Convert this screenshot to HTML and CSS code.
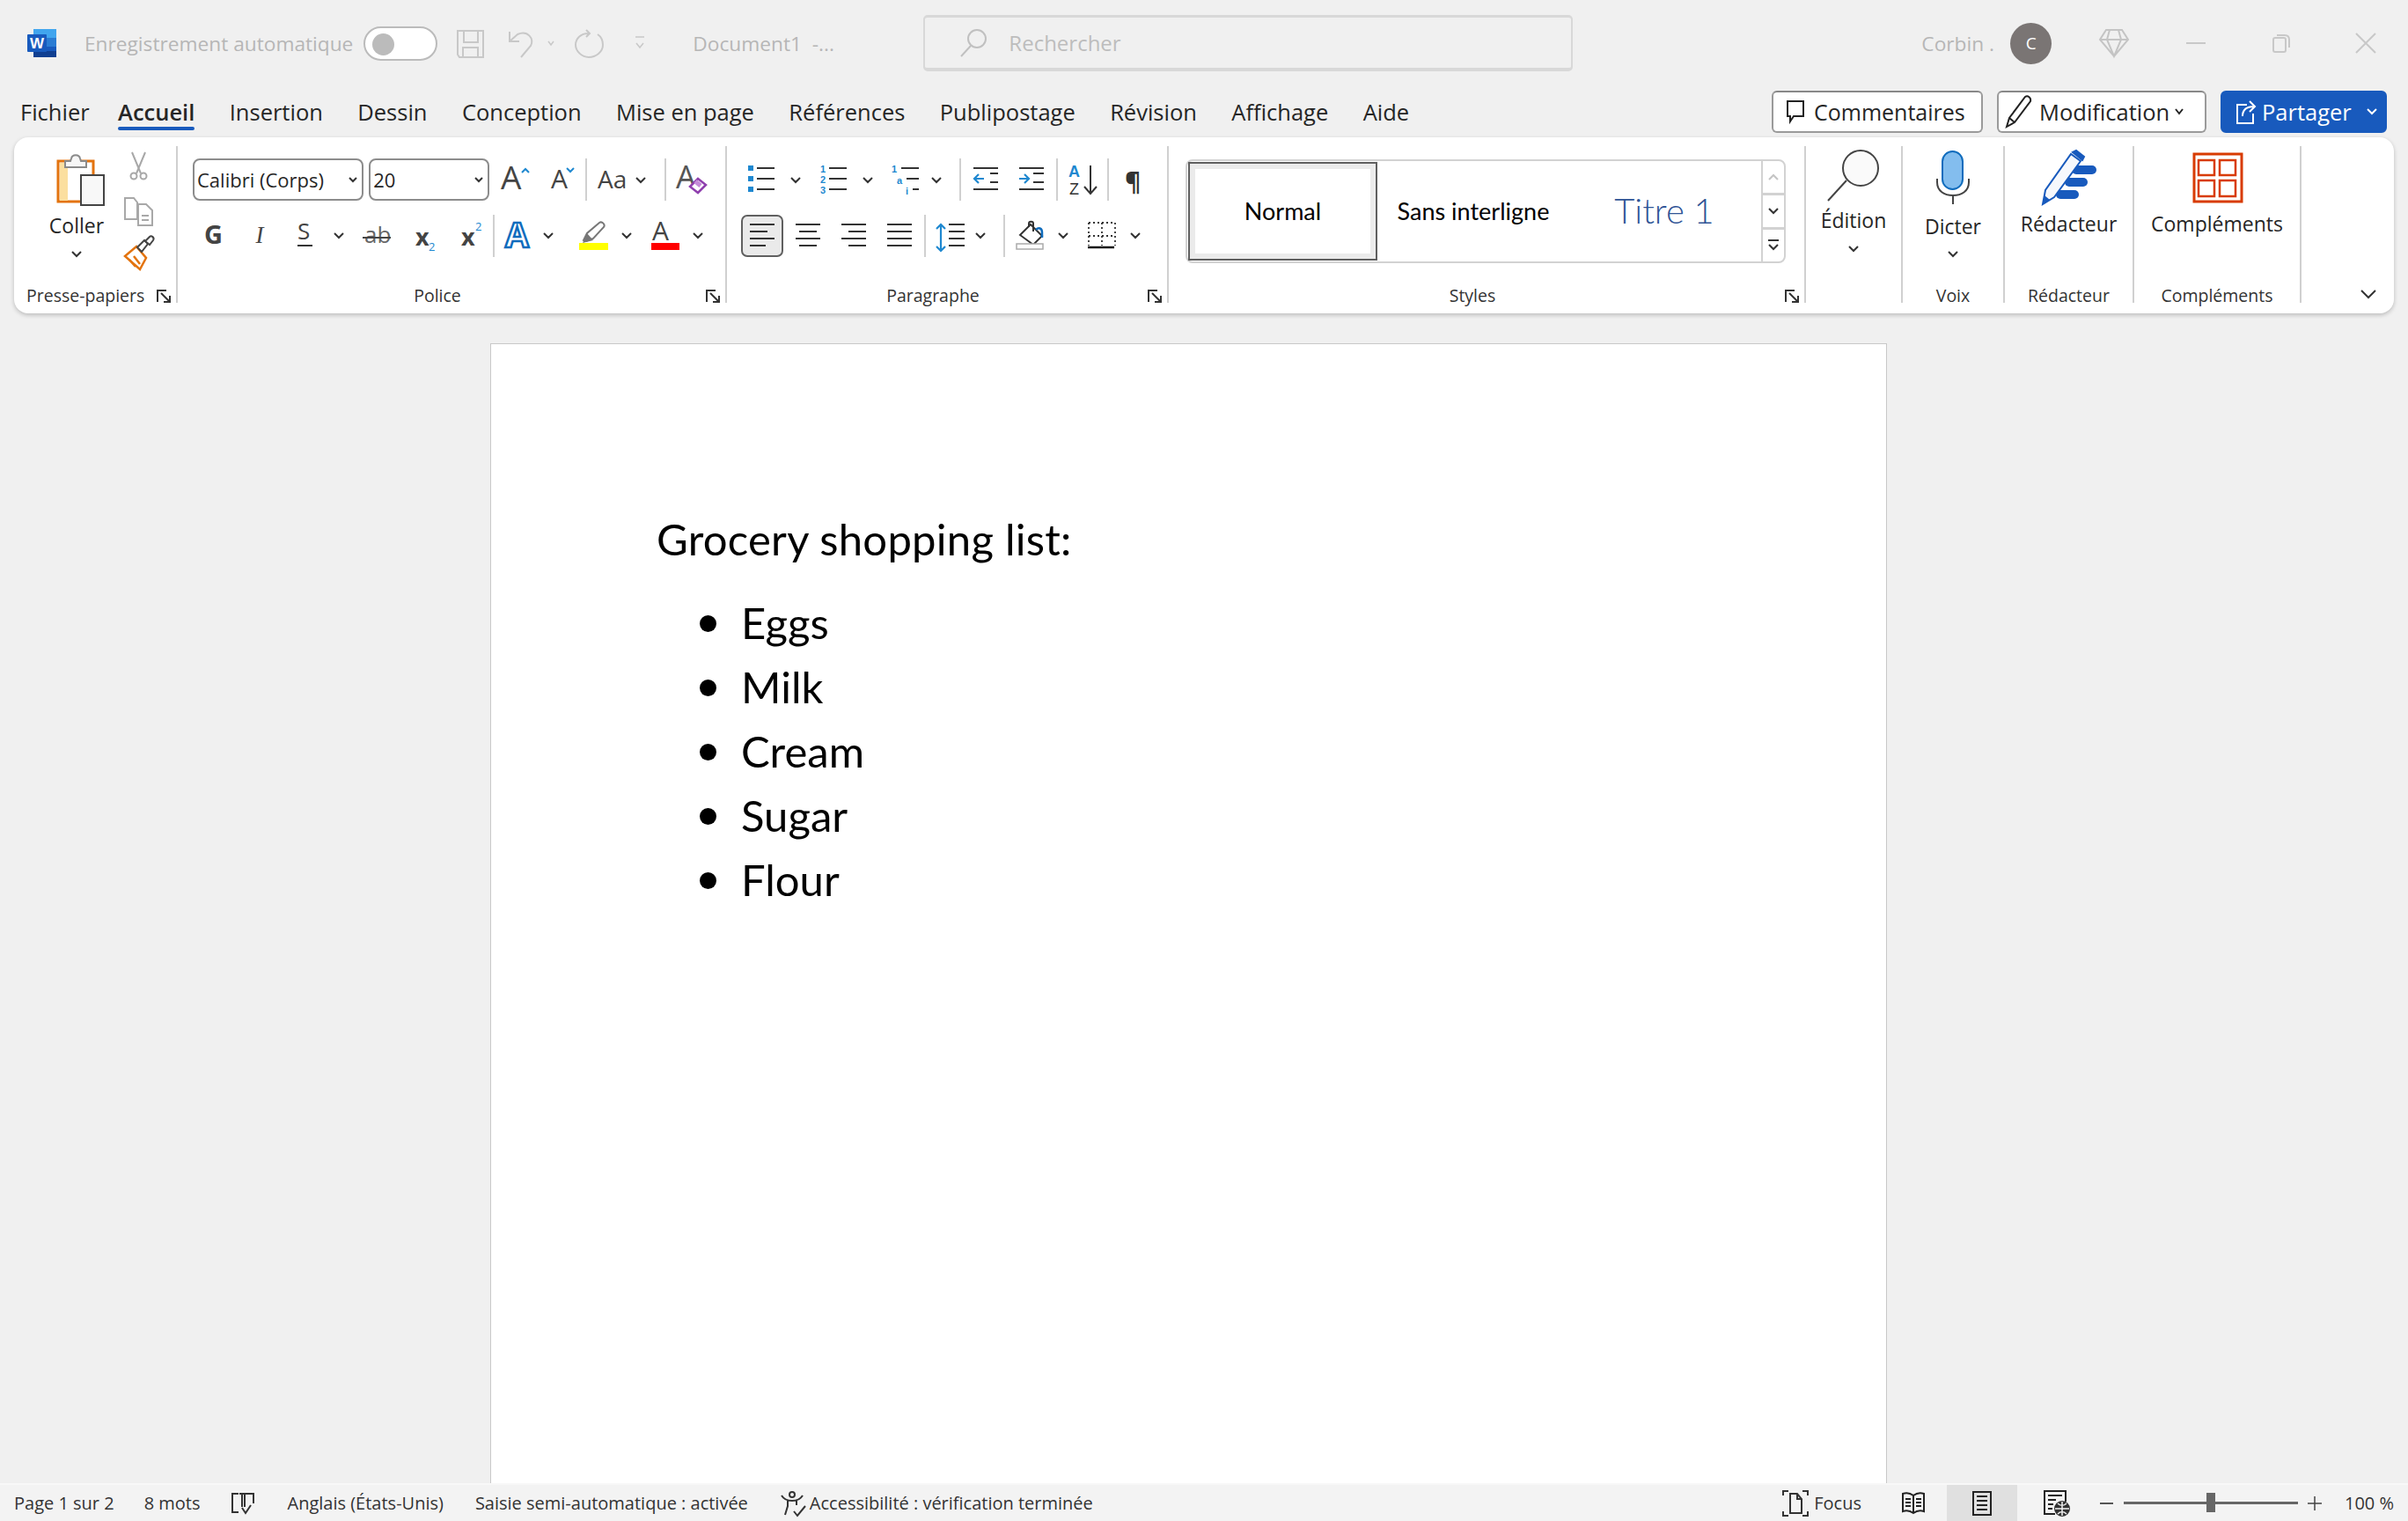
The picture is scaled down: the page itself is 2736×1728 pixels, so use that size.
FILE: index.html
```html
<!DOCTYPE html>
<html lang="fr">
<head>
    <meta charset="UTF-8">
    <title>Document1 - Word</title>
    <link rel="stylesheet" href="styles.css">
</head>
<body>
    <header class="titlebar">
        <svg class="logo" width="36" height="34" viewBox="30 31 36 34">
            <rect x="38" y="32" width="26" height="11" fill="#41a5ee"/>
            <rect x="38" y="42" width="26" height="11" fill="#2b7cd3"/>
            <rect x="38" y="52" width="26" height="6" fill="#185abd"/>
            <rect x="38" y="57" width="26" height="7" fill="#103f91"/>
            <rect x="31" y="38" width="22" height="20" rx="1" fill="#185abd"/>
            <text x="42" y="54" class="logo-w">W</text>
        </svg>
        <span class="autosave">Enregistrement automatique</span>
        <span class="toggle"><span class="knob"></span></span>
        <svg class="qat" width="250" height="40" viewBox="510 28 250 40" fill="none" stroke="#c8c8c8" stroke-width="2">
            <path d="M521 34h29v30h-27l-2-3z"/>
            <path d="M528 34v13h16v-13M527 64v-11h17v11"/>
            <path d="M580 35v11h11M580 46l9-8c12-5 19 5 15 13l-11 13"/>
            <path d="M624 46l3 4 3-4" stroke-width="1.5"/>
            <path d="M667 33l4 4-4 4M671 37c-10-1-16 6-16 13 0 7 7 14 15 14s16-6 16-14c0-6-3-10-6-12"/>
            <path d="M723 41h10M724 48l4 5 4-5" stroke-width="1.5"/>
        </svg>
        <span class="docname">Document1&nbsp; -...</span>
        <div class="search">
            <svg width="34" height="36" viewBox="0 0 34 36" fill="none" stroke="#c0c0c0" stroke-width="2">
                <circle cx="21" cy="13" r="10"/>
                <path d="M14 21L3 33"/>
            </svg>
            <span>Rechercher</span>
        </div>
        <span class="username">Corbin .</span>
        <span class="avatar">C</span>
        <svg class="diamond" width="36" height="34" viewBox="0 0 36 34" fill="none" stroke="#c4c4c4" stroke-width="2">
            <path d="M9 2h18l7 11-16 19L2 13zM2 13h32M13 2l-3 11 8 19 8-19-3-11"/>
        </svg>
        <svg class="winbtn" width="22" height="4" viewBox="0 0 22 4"><path d="M0 2h22" stroke="#c8c8c8" stroke-width="2"/></svg>
        <svg class="winbtn" width="20" height="22" viewBox="0 0 20 22" fill="none" stroke="#c8c8c8" stroke-width="2"><rect x="1" y="5" width="14" height="16" rx="2"/><path d="M5 2h9c3 0 5 2 5 5v9"/></svg>
        <svg class="winbtn" width="24" height="24" viewBox="0 0 24 24"><path d="M1 1l22 22M23 1L1 23" stroke="#c8c8c8" stroke-width="2"/></svg>
    </header>

    <nav class="tabs">
        <span class="tab first">Fichier</span>
        <span class="tab active">Accueil</span>
        <span class="tab">Insertion</span>
        <span class="tab">Dessin</span>
        <span class="tab">Conception</span>
        <span class="tab">Mise en page</span>
        <span class="tab">Références</span>
        <span class="tab">Publipostage</span>
        <span class="tab">Révision</span>
        <span class="tab">Affichage</span>
        <span class="tab">Aide</span>
        <div class="tab-actions">
            <span class="action comments">
                <svg width="22" height="32" viewBox="0 0 22 32" fill="none" stroke="#222" stroke-width="2"><path d="M2 4h18v17H9l-4 6v-6H2z"/></svg>
                Commentaires
            </span>
            <span class="action editing">
                <svg width="34" height="40" viewBox="0 0 34 40" fill="none" stroke="#222" stroke-width="2"><path d="M3 37l3-10L24 3c3-2 7 1 6 5L12 32z"/><path d="M6 27l6 5"/></svg>
                Modification
                <svg width="10" height="8" viewBox="0 0 10 8" fill="none" stroke="#222" stroke-width="2"><path d="M1 1l4 5 4-5"/></svg>
            </span>
            <span class="action share">
                <svg width="26" height="30" viewBox="0 0 26 30" fill="none" stroke="#fff" stroke-width="2"><path d="M14 7H3v21h18V17"/><path d="M9 20c0-8 5-11 13-11M17 3l6 6-6 6"/></svg>
                Partager
                <svg class="share-chev" width="12" height="8" viewBox="0 0 12 8" fill="none" stroke="#fff" stroke-width="2"><path d="M1 1l5 5 5-5"/></svg>
            </span>
        </div>
    </nav>

    <section class="ribbon">
        <div class="group clipboard">
            <div class="group-body">
                <div class="paste">
                    <svg width="102" height="68" viewBox="36 170 102 68">
                        <rect x="66" y="183" width="40" height="46" fill="#fff" stroke="#e3730e" stroke-width="3"/>
                        <rect x="68" y="185" width="9" height="43" fill="#fbdf9f"/>
                        <path d="M74 190v-7h6l1-3c1-5 9-5 10 0l1 3h6v7z" fill="#f7f7f7" stroke="#8a8a8a" stroke-width="2"/>
                        <rect x="92" y="199" width="26" height="34" fill="#f8f8f8" stroke="#444" stroke-width="2"/>
                    </svg>
                    <span class="big-text coller">Coller</span>
                    <svg class="chev-big" width="12" height="8" viewBox="0 0 12 8" fill="none" stroke="#333" stroke-width="2"><path d="M1 1l5 5 5-5"/></svg>
                </div>
                <svg class="clip-small" width="40" height="146" viewBox="138 166 40 146" fill="none">
                    <g stroke="#a8a8a8" stroke-width="2">
                        <path d="M150 173l10 24M165 173l-10 24"/>
                        <circle cx="152" cy="200" r="3.5"/><circle cx="163" cy="200" r="3.5"/>
                        <path d="M142 225h10l4 5v19h-14z" fill="#fff"/>
                        <path d="M157 232h9l7 7v17h-16z" fill="#fff"/>
                        <path d="M161 245h8M161 250h8"/>
                    </g>
                    <g stroke="#e3730e" stroke-width="2.5">
                        <path d="M142 291l13-11 11 13-7 13z" fill="#fff"/>
                        <path d="M147 295l7 8M152 291l7 9"/>
                    </g>
                    <path d="M156 281l8-8 4 4-7 9z" fill="#fff" stroke="#444" stroke-width="2"/>
                    <path d="M165 274l5-5c2-2 6 1 4 4l-4 5z" fill="#fff" stroke="#444" stroke-width="2"/>
                </svg>
            </div>
            <div class="group-label">Presse-papiers</div>
            <svg class="launcher" width="16" height="15" viewBox="0 0 16 15" fill="none" stroke="#333" stroke-width="2"><path d="M11 1H1v13M5 4l9 9M15 7v7H8"/></svg>
        </div>

        <div class="group police">
            <div class="group-body rows">
                <div class="row">
                    <div class="combo font-combo">Calibri (Corps)
                        <svg width="10" height="7" viewBox="0 0 10 7" fill="none" stroke="#333" stroke-width="2"><path d="M1 1l4 4 4-4"/></svg>
                    </div>
                    <div class="combo size-combo">20
                        <svg width="10" height="7" viewBox="0 0 10 7" fill="none" stroke="#333" stroke-width="2"><path d="M1 1l4 4 4-4"/></svg>
                    </div>
                    <svg class="after-combo" width="268" height="48" viewBox="557 180 268 48" fill="none">
                        <text x="570" y="215" class="ic" font-size="37" fill="#444">A</text>
                        <path d="M594 196l4-4 4 4" stroke="#1e88d0" stroke-width="2"/>
                        <text x="627" y="214" class="ic" font-size="30" fill="#444">A</text>
                        <path d="M645 191l4 4 4-4" stroke="#1e88d0" stroke-width="2"/>
                        <path d="M667 180v48M757 180v48" stroke="#d0d0d0" stroke-width="2"/>
                        <text x="680" y="214" class="ic" font-size="28" fill="#444">Aa</text>
                        <path d="M724 202l5 5 5-5" stroke="#333" stroke-width="2"/>
                        <text x="769" y="214" class="ic" font-size="36" fill="#555">A</text>
                        <path d="M785 212l9-9 9 7-9 9z" fill="#fff" stroke="#8f3fae" stroke-width="2.5"/>
                        <path d="M791 206l6 5" stroke="#c58bd8" stroke-width="5"/>
                    </svg>
                </div>
                <div class="row">
                    <svg width="606" height="48" viewBox="219 244 606 48" fill="none">
                        <text x="232" y="277" class="ic bold" font-size="29" fill="#444">G</text>
                        <text x="295" y="276" class="ic serif-i" font-size="27" fill="#444" text-anchor="middle">I</text>
                        <text x="338" y="272" class="ic" font-size="26" fill="#444">S</text>
                        <path d="M338 279h17" stroke="#333" stroke-width="2"/>
                        <path d="M380 265l5 5 5-5" stroke="#333" stroke-width="2"/>
                        <text x="414" y="276" class="ic" font-size="26" fill="#666">ab</text>
                        <path d="M412 270h32" stroke="#444" stroke-width="2"/>
                        <text x="472" y="279" class="ic bold" font-size="27" fill="#444">x</text>
                        <text x="487" y="285" class="ic" font-size="13" fill="#1e88d0">2</text>
                        <text x="524" y="279" class="ic bold" font-size="27" fill="#444">x</text>
                        <text x="540" y="262" class="ic" font-size="13" fill="#1e88d0">2</text>
                        <path d="M561 244v48" stroke="#d0d0d0" stroke-width="2"/>
                        <text x="574" y="281" class="ic bold" font-size="39" fill="#fff" stroke="#0f6cbd" stroke-width="2.5">A</text>
                        <path d="M618 265l5 5 5-5M707 265l5 5 5-5M788 265l5 5 5-5" stroke="#333" stroke-width="2"/>
                        <path d="M663 273l4-8 14-12c3-2 7 2 5 5l-12 13-8 3z" fill="#fff" stroke="#777" stroke-width="2"/>
                        <path d="M662 276l5-11 7 8z" fill="#777"/>
                        <rect x="658" y="276" width="33" height="8" fill="#ffff00"/>
                        <text x="741" y="273" class="ic" font-size="30" fill="#444">A</text>
                        <rect x="740" y="276" width="32" height="8" fill="#ff0000"/>
                    </svg>
                </div>
            </div>
            <div class="group-label">Police</div>
            <svg class="launcher" width="16" height="15" viewBox="0 0 16 15" fill="none" stroke="#333" stroke-width="2"><path d="M11 1H1v13M5 4l9 9M15 7v7H8"/></svg>
        </div>

        <div class="group paragraphe">
            <div class="group-body rows">
                <div class="row">
                    <svg width="480" height="48" viewBox="841 180 480 48" fill="none">
                        <g fill="#1e88d0">
                            <rect x="850" y="188" width="6" height="6"/><rect x="850" y="200" width="6" height="6"/><rect x="850" y="212" width="6" height="6"/>
                            <text x="932" y="196" class="ic-small">1</text>
                            <text x="932" y="208" class="ic-small">2</text>
                            <text x="932" y="220" class="ic-small">3</text>
                            <text x="1013" y="196" class="ic-small">1</text>
                            <text x="1019" y="209" class="ic-small">a</text>
                            <text x="1029" y="221" class="ic-small">i</text>
                        </g>
                        <path d="M860 191h20M860 203h20M860 215h20M942 191h20M942 203h20M942 215h20M1024 191h20M1030 203h14M1037 215h7" stroke="#333" stroke-width="2"/>
                        <path d="M899 202l5 5 5-5M981 202l5 5 5-5M1059 202l5 5 5-5" stroke="#333" stroke-width="2"/>
                        <path d="M1091 180v48M1201 180v48M1259 180v48" stroke="#d0d0d0" stroke-width="2"/>
                        <path d="M1106 191h28M1125 197h9M1125 207h9M1106 215h28M1158 191h28M1174 197h12M1174 207h12M1158 215h28" stroke="#333" stroke-width="2"/>
                        <path d="M1118 203h-11M1112 198l-5 5 5 5M1158 203h11M1164 198l5 5-5 5" stroke="#1e88d0" stroke-width="2.2"/>
                        <text x="1214" y="200.5" class="ic-sort" fill="#1e88d0" font-weight="700">A</text>
                        <text x="1215" y="221" class="ic-sort" fill="#333">Z</text>
                        <path d="M1239 188v31M1232 212l7 8 7-8" stroke="#333" stroke-width="2"/>
                        <text x="1278" y="217" class="ic bold" font-size="28" fill="#333">¶</text>
                    </svg>
                </div>
                <div class="row">
                    <svg width="480" height="48" viewBox="841 244 480 48" fill="none">
                        <rect x="843" y="245" width="46" height="46" rx="6" fill="#eaeaea" stroke="#606060" stroke-width="2"/>
                        <path d="M852 255h28M852 263h20M852 271h28M852 279h18" stroke="#333" stroke-width="2"/>
                        <path d="M904 255h28M908 263h20M904 271h28M908 279h20" stroke="#333" stroke-width="2"/>
                        <path d="M956 255h28M964 263h20M956 271h28M964 279h20" stroke="#333" stroke-width="2"/>
                        <path d="M1008 255h28M1008 263h28M1008 271h28M1008 279h28" stroke="#333" stroke-width="2"/>
                        <path d="M1051 244v48M1141 244v48" stroke="#d0d0d0" stroke-width="2"/>
                        <path d="M1069 256v29M1064 260l5-5 5 5M1064 280l5 5 5-5" stroke="#1e88d0" stroke-width="2.2"/>
                        <path d="M1078 255h18M1078 263h18M1078 271h18M1078 279h18" stroke="#333" stroke-width="2"/>
                        <path d="M1109 265l5 5 5-5M1203 265l5 5 5-5M1285 265l5 5 5-5" stroke="#333" stroke-width="2"/>
                        <path d="M1159 267l12-12 13 13-10 10z" fill="#fff" stroke="#333" stroke-width="2"/>
                        <path d="M1169 258v-4c0-3 5-3 5 0v9" stroke="#333" stroke-width="2"/>
                        <path d="M1177 261c3-3 7-2 7 3v6" stroke="#0f6cbd" stroke-width="2.5"/>
                        <rect x="1155" y="277" width="30" height="6" stroke="#aaa" stroke-width="1.5" fill="#fff"/>
                        <path d="M1237 253h30M1237 268h30M1237 253v26M1252 253v26M1267 253v26" stroke="#333" stroke-width="1.8" stroke-dasharray="2 3"/>
                        <path d="M1236 281h30" stroke="#111" stroke-width="2.5"/>
                    </svg>
                </div>
            </div>
            <div class="group-label">Paragraphe</div>
            <svg class="launcher" width="16" height="15" viewBox="0 0 16 15" fill="none" stroke="#333" stroke-width="2"><path d="M11 1H1v13M5 4l9 9M15 7v7H8"/></svg>
        </div>

        <div class="group styles-group">
            <div class="group-body">
                <div class="gallery">
                    <div class="style-normal"><div class="style-inner">Normal</div></div>
                    <div class="style-plain">Sans interligne</div>
                    <div class="style-title">Titre 1</div>
                    <div class="gallery-scroll">
                        <div class="scroll-btn"><svg width="12" height="8" viewBox="0 0 12 8" fill="none" stroke="#c4c4c4" stroke-width="2"><path d="M1 7l5-5 5 5"/></svg></div>
                        <div class="scroll-btn"><svg width="12" height="8" viewBox="0 0 12 8" fill="none" stroke="#333" stroke-width="2"><path d="M1 1l5 5 5-5"/></svg></div>
                        <div class="scroll-btn"><svg width="14" height="14" viewBox="0 0 14 14" fill="none" stroke="#333" stroke-width="2"><path d="M1 1h12M2 6l5 5 5-5"/></svg></div>
                    </div>
                </div>
            </div>
            <div class="group-label">Styles</div>
            <svg class="launcher" width="16" height="15" viewBox="0 0 16 15" fill="none" stroke="#333" stroke-width="2"><path d="M11 1H1v13M5 4l9 9M15 7v7H8"/></svg>
        </div>

        <div class="group edition">
            <div class="group-body big">
                <svg width="90" height="66" viewBox="2061 166 90 66" fill="none" stroke="#444" stroke-width="2">
                    <circle cx="2114" cy="191" r="20" fill="#fafafa"/>
                    <path d="M2098 205l-21 23"/>
                </svg>
                <span class="big-text">Édition</span>
                <svg class="chev-big" width="12" height="8" viewBox="0 0 12 8" fill="none" stroke="#333" stroke-width="2"><path d="M1 1l5 5 5-5"/></svg>
            </div>
            <div class="group-label"></div>
        </div>

        <div class="group voix">
            <div class="group-body big">
                <svg width="90" height="70" viewBox="2175 166 90 70" fill="none">
                    <rect x="2208" y="172" width="23" height="43" rx="11.5" fill="#83bdee" stroke="#0f6cbd" stroke-width="2"/>
                    <path d="M2202 203v4c0 10 8 15 18 15s18-5 18-15v-4M2220 222v10" stroke="#444" stroke-width="2"/>
                </svg>
                <span class="big-text dicter">Dicter</span>
                <svg class="chev-big" width="12" height="8" viewBox="0 0 12 8" fill="none" stroke="#333" stroke-width="2"><path d="M1 1l5 5 5-5"/></svg>
            </div>
            <div class="group-label">Voix</div>
        </div>

        <div class="group redacteur">
            <div class="group-body big">
                <svg width="90" height="70" viewBox="2306 166 90 70">
                    <rect x="2354" y="188" width="28" height="10" rx="5" fill="#185abd"/>
                    <rect x="2346" y="202" width="26" height="10" rx="5" fill="#185abd"/>
                    <rect x="2336" y="216" width="26" height="10" rx="5" fill="#185abd"/>
                    <path d="M2321 232l3-16 29-41 11 8-30 41z" fill="#f6f8fc" stroke="#185abd" stroke-width="2"/>
                    <path d="M2355 173l4-2 9 7-2 4z" fill="#185abd" stroke="#185abd" stroke-width="2"/>
                    <path d="M2321 232l2-10 6 5z" fill="#185abd"/>
                </svg>
                <span class="big-text">Rédacteur</span>
            </div>
            <div class="group-label">Rédacteur</div>
        </div>

        <div class="group complements">
            <div class="group-body big">
                <svg width="90" height="70" viewBox="2475 166 90 70" fill="none" stroke="#d83b01">
                    <rect x="2494" y="175" width="54" height="54" stroke-width="3"/>
                    <path d="M2499 182h18v17h-18zM2523 182h18v17h-18zM2499 205h18v18h-18zM2523 205h18v18h-18z" stroke-width="2.5"/>
                </svg>
                <span class="big-text">Compléments</span>
            </div>
            <div class="group-label">Compléments</div>
        </div>

        <div class="collapse">
            <svg width="18" height="11" viewBox="0 0 18 11" fill="none" stroke="#333" stroke-width="2"><path d="M1 1l8 8 8-8"/></svg>
        </div>
    </section>

    <main class="workspace">
        <article class="page">
            <p class="doc-heading">Grocery shopping list:</p>
            <ul class="doc-list">
                <li>Eggs</li>
                <li>Milk</li>
                <li>Cream</li>
                <li>Sugar</li>
                <li>Flour</li>
            </ul>
        </article>
    </main>

    <footer class="statusbar">
        <span class="st page-count">Page 1 sur 2</span>
        <span class="st word-count">8 mots</span>
        <svg class="st-book" width="28" height="28" viewBox="0 0 28 28" fill="none" stroke="#333" stroke-width="2"><path d="M9 3H2v21h7M19 3h7v11M10 3h9M13 3v15M16 3v15M13 19l4 6 6-9"/></svg>
        <span class="st lang">Anglais (États-Unis)</span>
        <span class="st autotext">Saisie semi-automatique : activée</span>
        <svg class="st-access" width="32" height="30" viewBox="0 0 32 30" fill="none" stroke="#333" stroke-width="2"><circle cx="14" cy="5" r="3"/><path d="M2 6c3 5 7 6 12 6s9-1 12-6M9 12v6l-3 10M19 12v5M16 24l4 5 9-11"/></svg>
        <span class="st access-text">Accessibilité : vérification terminée</span>
        <div class="st-right">
            <svg width="30" height="30" viewBox="0 0 30 30" fill="none" stroke="#333" stroke-width="2"><path d="M1 6V1h6M23 1h6v5M1 24v5h6M23 29h6v-5"/><path d="M9 4h8l5 6v16H9zM17 4v6h5"/></svg>
            <span class="st focus">Focus</span>
            <svg class="view-read" width="28" height="28" viewBox="0 0 28 28" fill="none" stroke="#222" stroke-width="2"><path d="M14 5C10 2 5 2 2 3v20c3-1 8-1 12 2 4-3 9-3 12-2V3c-3-1-8-1-12 2zM14 5v20M5 9h6M5 13h6M5 17h6M17 9h6M17 13h6M17 17h6"/></svg>
            <div class="view-print">
                <svg width="22" height="28" viewBox="0 0 22 28" fill="none" stroke="#222" stroke-width="2"><rect x="1" y="1" width="20" height="26"/><path d="M5 6h12M5 11h12M5 16h12M5 21h12"/></svg>
            </div>
            <svg class="view-web" width="30" height="30" viewBox="0 0 30 30" fill="none" stroke="#222" stroke-width="2"><path d="M13 27H1V1h24v12M5 6h16M5 11h9M5 16h6M5 21h5"/><circle cx="21" cy="21" r="8" fill="#333" stroke="#333"/><path d="M13 21h16M21 13v16M16 15c3 3 7 3 10 0M16 27c3-3 7-3 10 0" stroke="#f3f3f3" stroke-width="1.5"/></svg>
            <span class="zoom-minus"></span>
            <div class="zoom-track"><span class="zoom-thumb"></span></div>
            <svg class="zoom-plus" width="16" height="16" viewBox="0 0 16 16"><path d="M0 8h16M8 0v16" stroke="#444" stroke-width="1.5"/></svg>
            <span class="st zoom-value">100 %</span>
        </div>
    </footer>
</body>
</html>
```

FILE: styles.css
```css
* {
    box-sizing: border-box;
}

body {
    margin: 0;
    height: 100vh;
    overflow: hidden;
    display: flex;
    flex-direction: column;
    background-color: #f0f0f0;
    color: #262626;
    font-family: "Open Sans", "Noto Sans", sans-serif;
}

svg {
    display: block;
    flex: none;
    overflow: visible;
}

/* title bar */
.titlebar {
    height: 100px;
    flex: none;
    display: flex;
    align-items: center;
    padding: 0 0 2px 30px;
    font-size: 22.7px;
    color: #b6b6b6;
}
.logo-w {
    font: bold 17px "Liberation Sans", sans-serif;
    fill: #fff;
    text-anchor: middle;
}
.autosave {
    margin-left: 30px;
}
.toggle {
    width: 84px;
    height: 39px;
    margin-left: 12px;
    padding: 6px 8px;
    border: 2px solid #bbb;
    border-radius: 20px;
    background: #fff;
}
.knob {
    display: block;
    width: 25px;
    height: 25px;
    border-radius: 50%;
    background: #bbb;
}
.qat {
    margin-left: 12px;
}
.docname {
    margin-left: 28px;
    width: 262px;
    white-space: nowrap;
}
.search {
    width: 738px;
    height: 64px;
    display: flex;
    align-items: center;
    gap: 23px;
    padding-left: 38px;
    border: 2px solid #d8d8d8;
    border-bottom-width: 4px;
    border-top-width: 3px;
    border-radius: 5px;
    color: #bdbdbd;
    font-size: 24px;
}
.username {
    margin-left: 396px;
    width: 101px;
    white-space: nowrap;
}
.avatar {
    width: 47px;
    height: 47px;
    border-radius: 50%;
    background: #7a7574;
    color: #fff;
    font-size: 19px;
    display: flex;
    align-items: center;
    justify-content: center;
}
.diamond {
    margin-left: 53px;
}
.winbtn:nth-of-type(n) {
    margin-left: 64px;
}
.winbtn + .winbtn {
    margin-left: 76px;
}
.winbtn + .winbtn + .winbtn {
    margin-left: 74px;
}

/* tabs */
.tabs {
    height: 56px;
    flex: none;
    display: flex;
    align-items: center;
    gap: 39.4px;
    padding: 0 0 2px 23px;
    font-size: 25.5px;
}
.tab {
    position: relative;
    white-space: nowrap;
}
.tab.first {
    margin-right: -7px;
}
.tab.active {
    font-weight: 600;
}
.tab.active::after {
    content: "";
    position: absolute;
    left: 0;
    right: 0;
    bottom: -4px;
    height: 4px;
    border-radius: 2px;
    background: #185abd;
}
.tab-actions {
    margin-left: auto;
    margin-right: 24px;
    display: flex;
    gap: 16px;
}
.action {
    height: 48px;
    display: flex;
    align-items: center;
    gap: 6px;
    border: 2px solid #9a9a9a;
    border-top-color: #888;
    border-radius: 6px;
    background: #fff;
    white-space: nowrap;
}
.comments {
    width: 240px;
    padding-left: 14px;
    gap: 10px;
    font-size: 25px;
}
.editing {
    width: 238px;
    padding-left: 6px;
}
.share {
    width: 189px;
    padding-left: 14px;
    gap: 5px;
    border-color: #185abd;
    background: #185abd;
    color: #fff;
}
.share-chev {
    margin-left: 12px;
}

/* ribbon */
.ribbon {
    height: 200px;
    flex: none;
    margin: 0 16px;
    padding: 10px 0 12px;
    display: flex;
    background: #fff;
    border-radius: 16px;
    box-shadow: 0 2px 5px rgba(0, 0, 0, 0.22);
}
.group {
    position: relative;
    flex: none;
    display: flex;
    flex-direction: column;
    border-right: 2px solid #d0d0d0;
}
.group-body {
    flex: 1;
    display: flex;
}
.group-label {
    height: 16px;
    line-height: 16px;
    font-size: 19.5px;
    text-align: center;
    color: #333;
    white-space: nowrap;
}
.launcher {
    position: absolute;
    right: 6px;
    bottom: 0;
}
.clipboard {
    width: 186px;
    padding-left: 20px;
}
.clipboard .group-label {
    margin-left: -6px;
    width: 147px;
    text-align: left;
}
.police {
    width: 624px;
    padding-left: 17px;
}
.police .group-label {
    margin-left: -17px;
    padding-right: 32px;
}
.paragraphe {
    width: 502px;
    padding-left: 15px;
}
.paragraphe .group-label {
    margin-left: -15px;
    padding-right: 32px;
}
.styles-group {
    width: 724px;
    padding-left: 19px;
}
.styles-group .group-label {
    margin-left: -19px;
    padding-right: 32px;
}
.edition {
    width: 110px;
}
.voix {
    width: 116px;
}
.redacteur {
    width: 147px;
}
.complements {
    width: 190px;
}
.big-text {
    font-size: 23px;
    line-height: 30px;
    margin-top: 3px;
    white-space: nowrap;
}
.paste,
.big {
    flex-direction: column;
    align-items: center;
}
.paste {
    display: flex;
    width: 102px;
    margin-top: 4px;
}
.chev-big {
    margin-top: 14px;
}
.dicter {
    margin-top: 6px;
}
.dicter + .chev-big {
    margin-top: 13px;
}
.rows {
    flex-direction: column;
    gap: 16px;
    padding-top: 14px;
}
.row {
    height: 48px;
    display: flex;
    gap: 6px;
}
.after-combo {
    margin-left: -6px;
}
.combo {
    height: 48px;
    display: flex;
    align-items: center;
    justify-content: space-between;
    padding: 0 5px 0 3px;
    border: 2px solid #8c8c8c;
    border-radius: 8px;
    font-size: 22px;
}
.font-combo {
    width: 196px;
}
.size-combo {
    width: 138px;
}
.ic {
    font-family: "Open Sans", sans-serif;
}
.ic-small {
    font: bold 11px "Liberation Sans", sans-serif;
}
.ic-sort {
    font-family: "Liberation Sans", sans-serif;
    font-size: 18px;
}
.bold {
    font-weight: 700;
}
.serif-i {
    font-family: "Liberation Serif", serif;
    font-style: italic;
}

/* style gallery */
.gallery {
    width: 682px;
    height: 118px;
    margin-top: 15px;
    display: flex;
    align-items: stretch;
    padding: 1px;
    border: 2px solid #d2d2d2;
    border-radius: 8px;
    font-family: "Lato", "Open Sans", sans-serif;
    color: #000;
}
.style-normal {
    width: 215px;
    flex: none;
    border: 2px solid #5f5f5f;
}
.style-inner {
    height: 100%;
    padding-bottom: 2px;
    display: flex;
    align-items: center;
    justify-content: center;
    border: 6px solid #ebebeb;
    font-size: 27px;
}
.style-plain,
.style-title {
    display: flex;
    align-items: center;
    justify-content: center;
    flex: none;
    padding-bottom: 2px;
}
.style-plain {
    width: 218px;
    font-size: 27px;
}
.style-title {
    width: 216px;
    font-size: 40px;
    font-weight: 300;
    color: #2f5496;
}
.gallery-scroll {
    flex: 1;
    margin: -1px -1px -1px 2px;
    display: flex;
    flex-direction: column;
    border-left: 2px solid #d2d2d2;
}
.scroll-btn {
    flex: 1;
    display: flex;
    align-items: center;
    justify-content: center;
    border-bottom: 3px solid #d2d2d2;
}
.scroll-btn:last-child {
    border-bottom: none;
}
.collapse {
    flex: 1;
    display: flex;
    justify-content: flex-end;
    align-items: flex-end;
    padding: 0 20px 4px 0;
}

/* document */
.workspace {
    flex: 1;
    min-height: 0;
    overflow: hidden;
    padding: 34px 0 0 557px;
}
.page {
    width: 1587px;
    height: 1400px;
    padding: 185px 0 0 188px;
    background: #fff;
    border: 1px solid #c8c8c8;
    font-family: "Lato", "Open Sans", sans-serif;
    font-size: 49px;
    color: #000;
}
.doc-heading {
    margin: 0;
    height: 73px;
    line-height: 73px;
    letter-spacing: 0.25px;
}
.doc-list {
    margin: 22px 0 0;
    padding: 0 0 0 96px;
    list-style: none;
}
.doc-list li {
    position: relative;
    height: 73px;
    line-height: 73px;
}
.doc-list li::before {
    content: "";
    position: absolute;
    left: -47px;
    top: 28px;
    width: 19px;
    height: 19px;
    border-radius: 50%;
    background: #000;
}

/* status bar */
.statusbar {
    height: 41px;
    flex: none;
    margin-top: 2px;
    display: flex;
    align-items: center;
    padding-left: 16px;
    background: #f3f3f3;
    box-shadow: 0 -2px 0 #f8f8f8;
    font-size: 20px;
    color: #333;
}
.st {
    white-space: nowrap;
}
.word-count {
    margin-left: 34px;
}
.st-book {
    margin-left: 34px;
}
.lang {
    margin-left: 37px;
}
.autotext {
    margin-left: 36px;
}
.st-access {
    margin-left: 36px;
}
.access-text {
    margin-left: 2px;
}
.st-right {
    margin-left: auto;
    height: 100%;
    padding-right: 16px;
    display: flex;
    align-items: center;
}
.focus {
    margin-left: 6px;
}
.view-read {
    margin-left: 45px;
}
.view-print {
    width: 80px;
    height: 100%;
    margin-left: 24px;
    display: flex;
    align-items: center;
    justify-content: center;
    background: #e0e0e0;
}
.view-web {
    margin-left: 30px;
}
.zoom-minus {
    width: 15px;
    height: 2px;
    margin-left: 34px;
    background: #555;
}
.zoom-track {
    position: relative;
    width: 198px;
    height: 3px;
    margin-left: 12px;
    background: #666;
}
.zoom-thumb {
    position: absolute;
    left: 94px;
    top: -10px;
    width: 10px;
    height: 22px;
    background: #666;
}
.zoom-plus {
    margin-left: 11px;
}
.zoom-value {
    margin-left: 26px;
}
```
